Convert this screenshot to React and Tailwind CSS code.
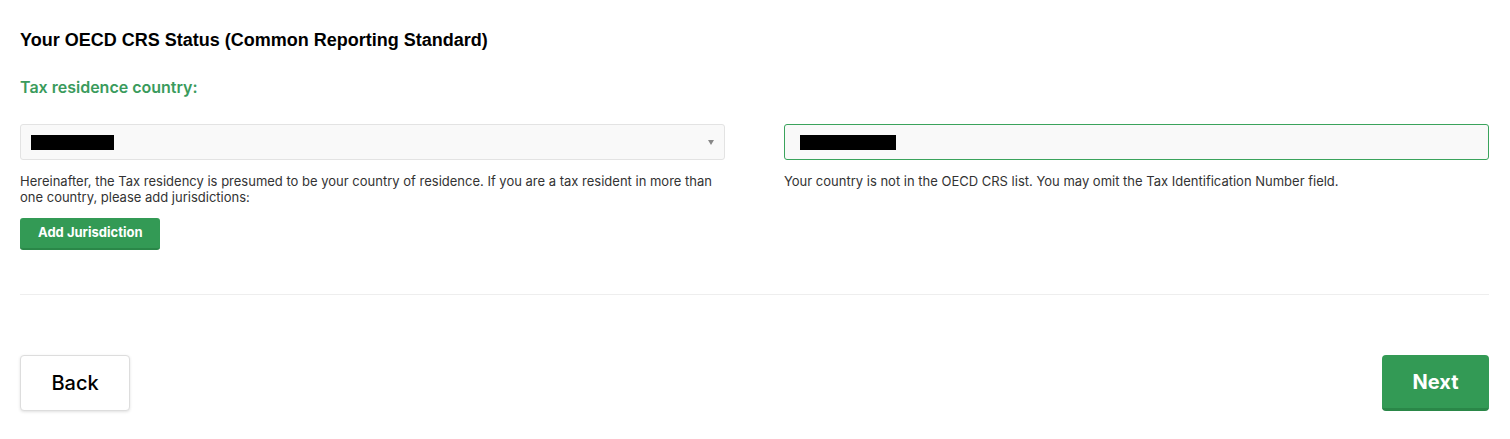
export default function App() {
  return (
    <div className="min-h-screen bg-white px-[20px] pr-[21px] pt-[29px] font-['Inter',sans-serif] text-black">
      <h2 className="font-['Liberation_Sans',Arial,sans-serif] text-[18px] font-bold leading-[22px]">
        Your OECD CRS Status (Common Reporting Standard)
      </h2>

      <div className="mt-[26px] text-[16px] font-semibold leading-[20px] text-[#3a9b5c]">
        Tax residence country:
      </div>

      <div className="mt-[27px] grid grid-cols-2 gap-[59px]">
        <div>
          <div className="relative flex h-[36px] items-center rounded-[3px] border border-[#e3e3e3] bg-[#f9f9f9] px-[10px]">
            <span className="block h-[15px] w-[83px] bg-black" />
            <span className="absolute right-[10px] top-[15px] h-0 w-0 border-x-[3.5px] border-t-[5px] border-x-transparent border-t-[#888]" />
          </div>
          <p className="mt-[13px] text-[13px] leading-[16px] text-[#333]">
            Hereinafter, the Tax residency is presumed to be your country of residence. If you are a tax resident in more than one country, please add jurisdictions:
          </p>
          <button className="mt-[13px] h-[32px] rounded-[3px] border-b-2 border-[#2a8748] bg-[#339a55] px-[18px] text-[13px] font-bold text-white">
            Add Jurisdiction
          </button>
        </div>
        <div>
          <div className="flex h-[36px] items-center rounded-[3px] border border-[#3aa35c] bg-[#f9f9f9] px-[15px]">
            <span className="block h-[15px] w-[96px] bg-black" />
          </div>
          <p className="mt-[13px] text-[13px] leading-[16px] text-[#333]">
            Your country is not in the OECD CRS list. You may omit the Tax Identification Number field.
          </p>
        </div>
      </div>

      <div className="mt-[44px] border-t border-[#eeeeee]" />

      <div className="mt-[60px] flex items-center justify-between">
        <button className="h-[56px] w-[110px] rounded-[4px] border border-[#dddddd] bg-white text-[20px] font-medium text-black shadow-[0_1px_3px_rgba(0,0,0,0.12)]">
          Back
        </button>
        <button className="h-[56px] w-[107px] rounded-[4px] border-b-[3px] border-[#2a8748] bg-[#339a55] text-[20px] font-bold text-white">
          Next
        </button>
      </div>
    </div>
  );
}
